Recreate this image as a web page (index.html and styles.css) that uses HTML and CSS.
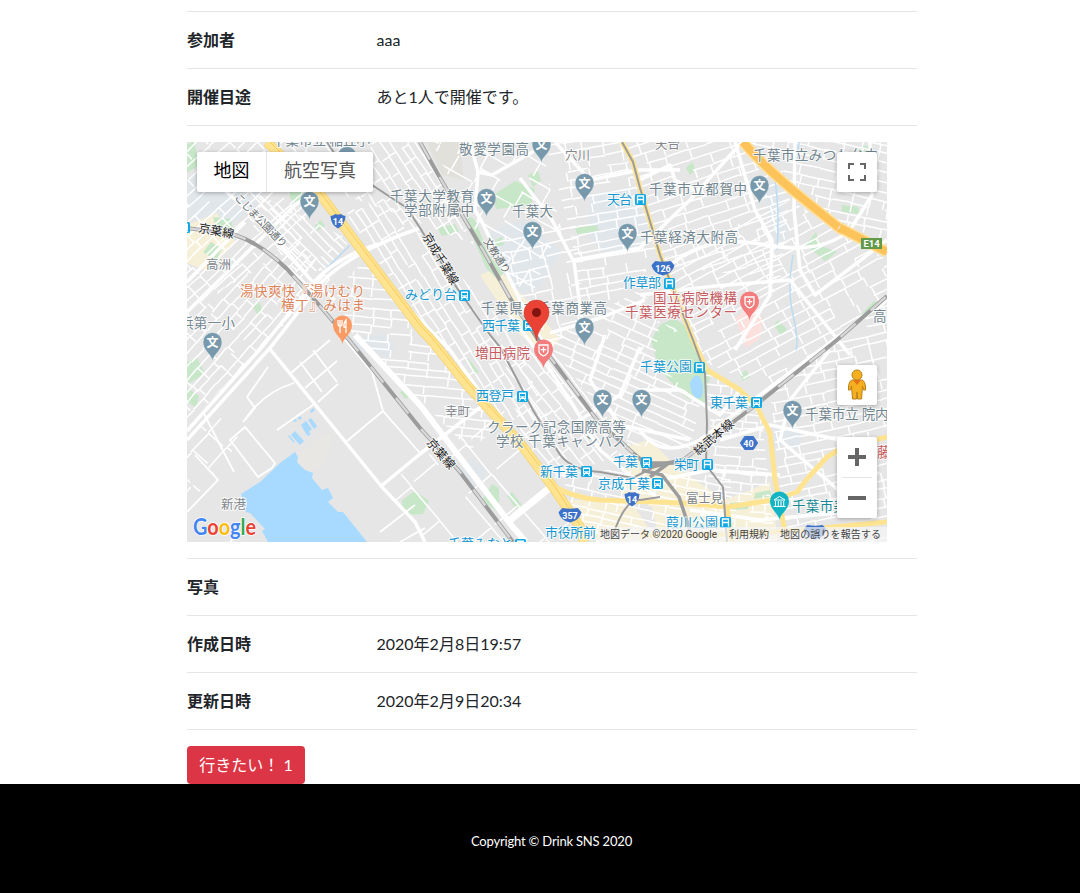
FILE: index.html
```html
<!DOCTYPE html>
<html lang="ja">
<head>
<meta charset="utf-8">
<title>Drink SNS</title>
<link rel="stylesheet" href="styles.css">
</head>
<body>
<main class="container">
  <div class="row"><div class="term">参加者</div><div class="value">aaa</div></div>
  <div class="row"><div class="term">開催目途</div><div class="value">あと1人で開催です。</div></div>
  <div class="row map-row">
    <div class="map">
      <svg class="map-canvas" viewBox="187 142 700 400" width="700" height="400">
        <defs>
          <path id="pin" d="M0 16C-1 9-9.500 6-9.500-3A9.500 9.500 0 0 1 9.500-3C9.500 6 1 9 0 16Z"/>
          <g id="school"><use href="#pin" class="pin-school"/><text class="pin-text" y="2">文</text></g>
          <g id="train"><rect x="-5.500" y="-5.500" width="11" height="11" rx="1.500" fill="#10a9e8"/><path d="M-3.500-4h7v6.500h-7z" fill="#fff"/><path d="M-2.500-2.500h5v2.300h-5z" fill="#10a9e8"/><path d="M-2 2.500l-1.300 2M2 2.500l1.300 2" stroke="#fff" stroke-width="1.200"/><path d="M-2.200 1h1M1.200 1h1" stroke="#10a9e8"/></g>
          <g id="mono"><rect x="-5.500" y="-5.500" width="11" height="11" rx="1.500" fill="#10a9e8"/><path d="M-3 4v-7.500h6V4M-3 0h6" fill="none" stroke="#fff" stroke-width="1.300"/></g>
          <g id="hospital"><use href="#pin" fill="#f47c7c"/><path d="M-4.500-7h9v6q0 3-4.500 5q-4.500-2-4.500-5zM0-5v5.500M-2.700-2.300h5.400" fill="none" stroke="#fff" stroke-width="1.300"/></g>
          <path id="shield" d="M-7.500-5Q-4-5.500-3-7Q0-6 3-7Q4-5.500 7.500-5Q7 4 0 7.500Q-7 4-7.500-5Z" fill="#3d72c8"/>
          <path id="shield-wide" d="M-11.500-2.500Q-10-5-7.500-7Q0-5.500 7.500-7Q10-5 11.500-2.500Q9 6 0 7.500Q-9 6-11.500-2.500Z" fill="#3d72c8"/>
        </defs>
        <rect x="187" y="142" width="700" height="400" fill="#e6e6e6"/>

        <g class="campus">
          <path d="M488 232l35-12 38 30-22 40-30 6z"/><path d="M590 195l44-8 18 55-46 14-18-20z"/>
          <path d="M765 180l15 5 8 60-14-8-9-35-9-20z"/><path d="M187 180l28-18 60 15-20 30-30 22-38-12z"/>
          <path d="M350 340l32-6 14 10-6 14-32-8z"/><path d="M455 475l15-18 18 12-8 22z"/><path d="M775 425l28 6-4 18-26-4z"/>
        </g>
        <g class="commercial">
          <path d="M187 225l30-12 18 30-28 28-20-8z"/><path d="M480 275l18-7 40 45 22 26-12 14-28-18z"/>
          <path d="M630 445l20-5 30 30 45 30 45-18 8 60H660l-8-35-30-14z"/><path d="M555 500h75l28 42h-60z"/>
        </g>
        <path d="M427 142h32l5 38-22-5z" fill="#e2e0db"/>
        <path d="M295 458l22-18 14-8-2 20-12 18-15-2z" fill="#e9e7e3"/>
        <path d="M735 318l20-16 8 18-3 18-14 10z" fill="#fbe0de"/>
        <g class="park">
          <path d="M290 185l14-9 12 18-8 14-18-9z"/><path d="M213 217l17 2 4 10-17 2z"/><path d="M203 252l8-10 11 7-6 12z"/>
          <path d="M187 145l7-5 5 25-12 8z"/><path d="M328 205l15 10 20 35-8-3z"/><path d="M315 225l6-5 4 6-8 5z"/>
          <path d="M187 362l10-4 8 15-18 12z"/><path d="M187 388l12 8-3 12-9-7z"/><path d="M253 307l6-5 4 8-6 4z"/>
          <path d="M493 195l22-14 20 8-4 17-35 3z"/><path d="M528 175l10-4 3 10-8 6z"/><path d="M467 215l8 5 14 35 15 17-6 8-12-12-18-42z"/>
          <path d="M437 228l18-4 4 8-17 4z"/><path d="M575 228l22-3 2 7-22 2z"/><path d="M495 240l7-3 2 8-8 2z"/>
          <path d="M660 325l14-7 16 11 4 14 16 35-6 27-19-8-26-28-8-29z"/><path d="M686 168l6-6 4 8-6 5z"/>
          <path d="M806 245l10-13 3 13 18 7-12 9z"/><path d="M842 205l16 2 2 7-18-2z"/><path d="M862 145l10 2-3 10-12-3z"/>
          <path d="M861 314l13-13 8 4-13 12z"/><path d="M778 320l9 9-6 7-7-11z"/><path d="M740 375l6-5 4 7-7 4z"/>
          <path d="M402 500l13-9 14 10-6 13-20 1z"/><path d="M482 500l10-16 7 4v25z"/><path d="M507 496l5-4 10 13-6 4z"/>
          <path d="M400 392l9-4 2 8-6 3z"/><path d="M730 503l20-2-2 8-18 1z"/><path d="M755 493l15-3 2 6-18 3z"/><path d="M467 357l12 15-5 2z"/>
        </g>

        <g id="streets" class="streets"></g>
        <path class="lane" d="M230 440L245 427 275 463 272 468 258 477ZM294 383Q270 390 252 410L243 422M277 430L313 405M347 441L383 411M345 340L372 372 383 411 420 453M291 373L330 340M305 388L337 361M318 402L338 384M300 362L322 392M313 350L337 382M268 367L247 397 255 408 245 420M203 412L234 472M380 532L415 505M400 542L425 528M187 512L218 480 195 455M230 542L250 525"/>

        <g class="harbor">
          <path d="M241 494L260 482 280 463 295 452 298 457 297 462 305 470 313 473 312 478 322 490 328 488 333 498 328 502 338 512 343 512 367 542H268L262 531 265 529 250 513 246 512Z"/>
          <path d="M291 435l4-4 9 10-4 4zM301 425l5-4 6 8-6 5zM308 420l3-2 6 8-3 3zM289 435l6 7-1 1-6-7zM310 411l3-3 2 2-4 3zM293 421l3-2 1 2-3 1zM298 418l2-2 2 2-3 2zM306 434l3-2 2 2-3 2z"/>
          <path d="M690 383q4-11 10-6 6 12 1 21-10 2-11-15z"/>
        </g>
        <path d="M350 245L318 277M774 175Q780 205 777 250M793 255Q787 290 793 315T796 350M799 142L795 170" fill="none" stroke="#bcdcf2" stroke-width="1.500"/>

        <g class="road-major">
          <path d="M187 440L270 348 320 284Q350 252 420 228"/><path d="M187 431L262 347 314 282Q335 258 378 244"/>
          <path d="M187 312L295 205 330 180"/><path d="M270 349L382 487 415 522 425 542"/><path d="M380 487L420 454 483 405"/>
          <path d="M355 335L420 405 512 526 526 542" stroke-width="6"/><path d="M510 520L552 486" stroke-width="7"/>
          <path d="M187 282L245 222M220 186L265 226 310 279 335 300"/>
          <path d="M470 142L478 172 492 175 550 142M478 172L475 210 482 222 520 300 550 355"/>
          <path d="M520 178L552 220 574 262 582 320"/><path d="M574 260L640 248 690 200 742 142"/>
          <path d="M660 275Q700 232 760 244T850 230L872 195 870 142"/><path d="M640 295L715 286 790 280 850 355"/>
          <path d="M795 142L794 210 800 270 815 295 887 240"/><path d="M735 142L755 210 772 240 770 295 735 350"/>
          <path d="M550 333L600 318 645 300"/><path d="M555 142L590 180 640 170 680 170M640 180L670 165 675 180 695 190"/>
          <path d="M510 315L540 355 570 400 600 450 660 500"/><path d="M640 430Q660 460 700 440L780 380 887 300"/>
          <path d="M605 335L590 380 620 425 690 440"/><path d="M720 440L770 425 887 450"/>
          <path d="M640 390L680 390 720 415 740 390"/><path d="M400 300L450 350 500 420"/><path d="M640 347L620 395 580 420"/>
          <path d="M830 350L790 400 780 440 850 500"/><path d="M660 480L710 470 780 475M690 510L760 520 870 510"/>
        </g>
        <g class="yellow-casing"><path d="M267 142L320 194 360 248 420 328 433 342 467 385 520 443 553 487 580 527 584 542" stroke-width="10"/></g>
        <g class="yellow">
          <path d="M267 142L320 194 360 248 420 328 433 342 467 385 520 443 553 487 580 527 584 542" stroke-width="8"/>
          <path d="M555 487Q575 498 600 500L683 503 728 507 773 500 797 492 807 479 827 457 840 449 887 437"/>
          <path d="M622 142L633 162 640 188 660 255 693 340 707 370 740 390 757 407 770 433 775 480 787 542"/>
          <path d="M727 507L732 542M640 535L710 535 790 531 887 522"/>
        </g>
        <path d="M270 142L320 192 360 245 420 325 433 339 467 382 520 440 553 484 580 525" fill="none" stroke="#f5c54b" stroke-width=".8"/>
        <path d="M743 142Q765 168 807 202T840 228L887 252" fill="none" stroke="#ffe099" stroke-width="11"/>
        <path d="M743 142Q765 168 807 202T840 228L887 252" fill="none" stroke="#fdc35b" stroke-width="8"/>

        <g class="rail">
          <path d="M187 228L235 235Q260 243 287 269L313 298 350 341 400 403 420 428 460 472 513 542"/>
          <path d="M420 142L440 178 480 245 510 298 550 357 597 420 633 453 650 467 683 460 753 407 837 340 887 296"/>
        </g>
        <g class="rail-dash">
          <path d="M187 228L235 235Q260 243 287 269L313 298 350 341 400 403 420 428 460 472 513 542"/>
          <path d="M420 142L440 178 480 245 510 298 550 357 597 420 633 453"/><path d="M683 460L753 407 837 340 887 296"/>
        </g>
        <g class="rail-thin">
          <path d="M327 142L340 162 375 187 407 208 420 228 457 288 490 335 500 347 533 410 557 450Q568 470 600 472L633 478 658 465"/>
          <path d="M622 142L633 162 640 188 660 255 693 340 705 373 707 423 706 465 723 487 727 542"/>
          <path d="M640 500Q625 498 612 538M640 500L660 497"/>
        </g>
        <path d="M640 463L682 463M642 470L662 475 679 497 690 530M650 477L670 462" fill="none" stroke="#9c9c9c" stroke-width="3.500"/>

        <g>
          <use href="#pin" x="347" y="159" class="pin-school"/>
          <use href="#school" x="309.500" y="204"/><use href="#school" x="486.500" y="201"/><use href="#school" x="541.500" y="147"/>
          <use href="#school" x="584.500" y="186"/><use href="#school" x="532.500" y="234"/><use href="#school" x="627.500" y="236"/>
          <use href="#school" x="759.500" y="188"/><use href="#school" x="584.500" y="330"/><use href="#school" x="602.500" y="402"/>
          <use href="#school" x="641.500" y="402"/><use href="#school" x="212.500" y="345"/><use href="#school" x="792.500" y="413"/>
          <use href="#hospital" x="749.500" y="304"/><use href="#hospital" x="543.500" y="352"/>
          <use href="#pin" x="342.500" y="328" fill="#fb9a63"/><path d="M338 320v4q0 2 2 2v7M342 320v4q0 2-2 2M340 320v5M346 333v-13q-2.500 3-2 7h2" fill="none" stroke="#fff" stroke-width="1.300"/>
          <use href="#pin" x="779.500" y="504" fill="#12b5c4"/><path d="M774 500l5.500-3.500L785 500zM775.500 501v5M778.300 501v5M781 501v5M783.700 501v5M773.500 506.500h12" fill="none" stroke="#fff"/>
        </g>
        <g>
          <use href="#train" x="464.500" y="295.500"/><use href="#train" x="528.500" y="325.500"/><use href="#train" x="522.500" y="396.500"/>
          <use href="#train" x="586.500" y="471.500"/><use href="#train" x="646.500" y="462.500"/><use href="#train" x="657.500" y="483.500"/>
          <use href="#train" x="756.500" y="402.500"/><use href="#train" x="520.500" y="544.500"/><use href="#train" x="184.500" y="227.500"/>
          <use href="#mono" x="640.500" y="199.500"/><use href="#mono" x="669.500" y="283.500"/><use href="#mono" x="699.500" y="367.500"/>
          <use href="#mono" x="707.500" y="464.500"/><use href="#mono" x="725.500" y="522.500"/>
        </g>
        <g class="road-number">
          <use href="#shield" x="338" y="221"/><text x="338" y="225">14</text>
          <use href="#shield" x="632" y="499"/><text x="632" y="503">14</text>
          <use href="#shield-wide" x="663" y="268"/><text x="663" y="271.500">126</text>
          <use href="#shield-wide" x="570" y="515"/><text x="570" y="518.500">357</text>
          <use href="#shield-wide" x="815" y="532"/>
          <path d="M741 443l4-6h8l4 6-4 6h-8z" fill="#3d72c8" stroke="#3d72c8" stroke-width="2" stroke-linejoin="round"/><text x="748.500" y="446.500">40</text>
          <rect x="861" y="238" width="21" height="11" fill="#63994a"/><text x="871.500" y="247" class="express">E14</text>
        </g>

        <g class="labels school-label">
          <text x="272" y="145" textLength="98">千葉市立 稲丘小</text>
          <text x="459" y="154" textLength="70">敬愛学園高</text><text x="390" y="201" textLength="84">千葉大学教育</text><text x="404" y="215" textLength="70">学部附属中</text>
          <text x="512" y="216" textLength="41">千葉大</text><text x="649" y="194" textLength="98">千葉市立都賀中</text><text x="640" y="242" textLength="98">千葉経済大附高</text>
          <text x="753" y="160" textLength="125">千葉市立みつわ台中</text><text x="481" y="313" textLength="126">千葉県立千葉商業高</text>
          <text x="487" y="432" textLength="139">クラーク記念国際高等</text><text x="496" y="446" textLength="130">学校 千葉キャンパス</text>
          <text x="180" y="328" textLength="55">浜第一小</text><text x="805" y="419" textLength="97">千葉市立 院内小</text><text x="873" y="321">高品</text>
        </g>
        <g class="labels place-label">
          <text x="206" y="269" textLength="25">高洲</text><text x="565" y="160" textLength="25">穴川</text><text x="655" y="149" textLength="25">天台</text>
          <text x="445" y="416" textLength="25">幸町</text><text x="221" y="509" textLength="25">新港</text><text x="686" y="503" textLength="37">富士見</text>
        </g>
        <g class="labels station-label">
          <text x="607" y="204" textLength="25">天台</text><text x="405" y="299" textLength="52">みどり台</text><text x="482" y="330" textLength="38">西千葉</text>
          <text x="476" y="400" textLength="38">西登戸</text><text x="540" y="476" textLength="38">新千葉</text><text x="613" y="466" textLength="25">千葉</text>
          <text x="598" y="488" textLength="52">京成千葉</text><text x="623" y="287" textLength="38">作草部</text><text x="640" y="371" textLength="52">千葉公園</text>
          <text x="710" y="407" textLength="38">東千葉</text><text x="674" y="469" textLength="25">栄町</text><text x="666" y="527" textLength="52">葭川公園</text>
          <text x="545" y="537" textLength="51">市役所前</text><text x="448" y="548" textLength="65">千葉みなと</text>
        </g>
        <g class="labels food-label"><text x="240" y="296" textLength="125">湯快爽快『湯けむり</text><text x="281" y="310" textLength="84">横丁』みはま</text></g>
        <g class="labels hospital-label"><text x="653" y="303" textLength="84">国立病院機構</text><text x="625" y="317" textLength="112">千葉医療センター</text><text x="475" y="358" textLength="55">増田病院</text><text x="877" y="457">藤田</text></g>
        <g class="labels museum-label"><text x="792" y="511" textLength="55">千葉市美</text></g>
        <g class="labels rail-label">
          <text x="198" y="232" transform="rotate(10 198 232)" textLength="36">京葉線</text>
          <text x="426" y="443" transform="rotate(49 426 443)" textLength="36">京葉線</text>
          <text x="422" y="236" transform="rotate(59 422 236)" textLength="58">京成千葉線</text>
          <text x="698" y="456" transform="rotate(-40 698 456)" textLength="48">総武本線</text>
        </g>
        <g class="labels street-label">
          <text x="234" y="198" transform="rotate(46 234 198)" textLength="70">こじま公園通り</text>
          <text x="483" y="241" transform="rotate(57 483 241)" textLength="40">文教通り</text>
        </g>
        <path d="M536.500 341C535 326 524 323 524 312.500a12.500 12.500 0 0 1 25 0C549 323 538 326 536.500 341Z" fill="#ea4335" stroke="#c93428" stroke-width=".5"/><circle cx="536.500" cy="312.500" r="4.500" fill="#811411"/>
        <path d="M598 527H887V542H598Z" fill="#f5f5f5" opacity=".7"/>
        <g class="google"><text x="193" y="535" textLength="63" lengthAdjust="spacingAndGlyphs"><tspan fill="#4285f4">G</tspan><tspan fill="#ea4335">o</tspan><tspan fill="#fbbc05">o</tspan><tspan fill="#4285f4">g</tspan><tspan fill="#34a853">l</tspan><tspan fill="#ea4335">e</tspan></text></g>
        <g class="credits"><text x="600" y="538" textLength="117">地図データ ©2020 Google</text><text x="729" y="538" textLength="40">利用規約</text><text x="780" y="538" textLength="101">地図の誤りを報告する</text></g>
      </svg>
      <div class="map-types"><span class="map-type selected">地図</span><span class="map-type">航空写真</span></div>
      <div class="control fullscreen"><svg width="18" height="18" viewBox="0 0 18 18"><path d="M1 6V1H6M12 1h5V6M17 12v5H12M6 17H1V12" fill="none" stroke="#666" stroke-width="2"/></svg></div>
      <div class="control person"><svg width="20" height="32" viewBox="0 0 20 32"><path d="M5 11Q2 12 1.500 18v3h2l1-4 1 13h4l.5-7 .5 7h4l1-13 1 4h2v-3Q18 12 15 11Z" fill="#f6b01f" stroke="#b97f1b"/><circle cx="10" cy="6" r="5" fill="#f6b01f" stroke="#b97f1b"/><path d="M6 11h8l-4 5z" fill="#e7711b"/></svg></div>
      <div class="control zoom"><svg width="40" height="81" viewBox="0 0 40 81"><path d="M11 20h18M20 11v18M11 61h18" stroke="#666" stroke-width="4"/><path d="M5 40.500h30" stroke="#e6e6e6"/></svg></div>
    </div>
  </div>
  <div class="row"><div class="term">写真</div><div class="value"></div></div>
  <div class="row"><div class="term">作成日時</div><div class="value">2020年2月8日19:57</div></div>
  <div class="row"><div class="term">更新日時</div><div class="value">2020年2月9日20:34</div></div>
  <div class="row action-row"><button class="like">行きたい！ 1</button></div>
</main>
<footer class="footer"><p class="copyright">Copyright © Drink SNS 2020</p></footer>
<script src="streets.js"></script>
</body>
</html>
```

FILE: styles.css
```css
* { box-sizing: border-box; }
body { margin: 0; background: #fff; color: #212529; font: 16px/24px Lato, "Noto Sans CJK JP", sans-serif; height: 893px; display: flex; flex-direction: column; overflow: hidden; }
.container { width: 730px; margin: 0 163px 0 187px; padding-top: 11px; }
.row { display: flex; border-top: 1px solid #e5e5e5; padding: 16px 0; height: 57px; }
.term { width: 189.5px; font-weight: 700; }
.map-row { height: 433px; }
.action-row { height: 55px; padding-bottom: 0; }
.like { height: 38px; width: 118px; padding: 0; border: 0; border-radius: 4px; background: #dc3545; color: #fff; font: inherit; white-space: nowrap; }
.footer { flex: 1; background: #000; color: #fff; text-align: center; display: flex; justify-content: center; align-items: center; }
.copyright { margin: 5px 0 0 23px; font-size: 13px; line-height: 20px; letter-spacing: -.19px; }

.map { position: relative; width: 700px; height: 400px; overflow: hidden; font-family: Roboto, "Noto Sans CJK JP", sans-serif; }
.map-canvas { display: block; }
.map-types { position: absolute; left: 10px; top: 10px; display: flex; height: 40px; background: #fff; border-radius: 2px; box-shadow: 0 1px 4px rgba(0,0,0,.3); font-size: 18px; line-height: 37px; }
.map-type { width: 106px; text-align: center; color: #565656; }
.map-type.selected { width: 70px; color: #000; border-right: 1px solid #e6e6e6; }
.control { position: absolute; right: 10px; width: 40px; height: 40px; background: #fff; border-radius: 2px; box-shadow: 0 1px 4px rgba(0,0,0,.3); display: flex; align-items: center; justify-content: center; }
.fullscreen { top: 10px; }
.person { top: 223px; }
.zoom { top: 295px; height: 81px; }

.streets path { fill: none; stroke: #fff; stroke-width: 1.5; }
.lane { fill: none; stroke: #fff; stroke-width: 1.8; }
.campus { fill: #e1e6eb; }
.commercial { fill: #f7f0d8; }
.park { fill: #c7e7c8; }
.harbor { fill: #a8daff; }
.road-major { fill: none; stroke: #fff; stroke-width: 3.5; stroke-linejoin: round; }
.yellow-casing { fill: none; stroke: #f7d676; stroke-linejoin: round; }
.yellow { fill: none; stroke: #fee391; stroke-width: 5; stroke-linejoin: round; }
.rail { fill: none; stroke: #9c9c9c; stroke-width: 4; }
.rail-dash { fill: none; stroke: #d7d7d7; stroke-width: 2.4; stroke-dasharray: 20 20; }
.rail-thin { fill: none; stroke: #9c9c9c; stroke-width: 2; }
.pin-school { fill: #7899ab; stroke: #e9eef0; stroke-width: .5; }
.pin-text { fill: #fff; font-size: 12px; font-weight: 700; text-anchor: middle; }
.road-number { fill: #fff; font-size: 9px; font-weight: 700; text-anchor: middle; }
.express { font-size: 9.5px; }
.labels { font-size: 13.5px; paint-order: stroke; stroke: rgba(255,255,255,.8); stroke-width: 2px; stroke-linejoin: round; }
.school-label { fill: #70858f; }
.place-label { fill: #81868a; font-size: 12.5px; }
.station-label { fill: #1598d1; font-size: 13px; }
.food-label { fill: #dd8459; }
.hospital-label { fill: #c65b60; }
.museum-label { fill: #168995; }
.rail-label { fill: #222; font-size: 12px; }
.street-label { fill: #666d71; font-size: 10.5px; }
.google { font: 700 22px Lato, sans-serif; paint-order: stroke; stroke: #fff; stroke-width: 1.5px; }
.credits { font-size: 10px; fill: #444; }
```

FILE: streets.js
```js
// Each district: outline, street angle, long spacing, cross spacing.
const districts = [
  ["187,142 265,142 310,195 300,245 187,310", -43, 9, 19],
  ["187,310 300,240 330,280 262,347 187,425", -48, 8, 17],
  ["250,190 350,240 320,280 300,290", 45, 6, 26],
  ["275,142 420,142 475,245 400,215 330,190", 57, 8, 17],
  ["325,192 400,210 510,330 550,420 500,420 430,330", 58, 8, 18],
  ["335,290 365,260 430,340 500,425 470,450 352,333", 5, 8, 20],
  ["187,442 215,412 240,440 215,475 187,505", -48, 20, 26],
  ["383,487 500,405 560,490 590,542 425,542", 50, 30, 42],
  ["432,142 540,142 560,225 530,300 475,230", 30, 15, 24],
  ["490,240 575,220 585,335 545,350", -12, 12, 18],
  ["545,142 622,142 660,260 585,320 570,230", -10, 9, 20],
  ["622,142 743,142 790,195 780,280 660,265", -18, 9, 21],
  ["750,142 887,142 887,240 840,225 790,190", 12, 9, 18],
  ["660,260 790,200 887,260 887,295 770,390 700,360", -28, 9, 22],
  ["545,340 640,290 690,345 660,320 655,360 700,405 690,450 630,445", 24, 9, 21],
  ["500,340 550,350 635,450 550,480 520,430", 52, 8, 18],
  ["560,470 640,470 730,470 735,542 585,542", 12, 8, 16],
  ["705,370 760,400 775,542 722,542", 5, 8, 14],
  ["770,390 887,300 887,542 785,542", -12, 9, 18]
];
let seed = 41;
const rnd = () => (seed = (seed * 16807) % 2147483647) / 2147483647;
const NS = "http://www.w3.org/2000/svg";
const make = (name, attrs, parent) => {
  const el = document.createElementNS(NS, name);
  for (const key in attrs) el.setAttribute(key, attrs[key]);
  parent.appendChild(el);
  return el;
};
const root = document.getElementById("streets");
districts.forEach(([points, angle, long, cross], i) => {
  make("polygon", { points }, make("clipPath", { id: "district" + i }, root));
  const group = make("g", { "clip-path": `url(#district${i})` }, root);
  const xy = points.split(" ").map(p => p.split(",").map(Number));
  const cx = xy.reduce((s, p) => s + p[0], 0) / xy.length;
  const cy = xy.reduce((s, p) => s + p[1], 0) / xy.length;
  let d = "";
  for (let y = -140; y < 140; y += long * (0.8 + rnd() * 0.5)) {
    for (let x = -140; x < 140; x += cross) {
      const shift = (rnd() - 0.5) * 2;
      if (rnd() > 0.13) d += `M${x} ${y}l${cross} ${shift}`;
      if (rnd() > 0.25) d += `M${x + shift * 3} ${y}v${long}`;
    }
  }
  make("path", { d, transform: `translate(${cx} ${cy}) rotate(${angle})` }, group);
});
```
